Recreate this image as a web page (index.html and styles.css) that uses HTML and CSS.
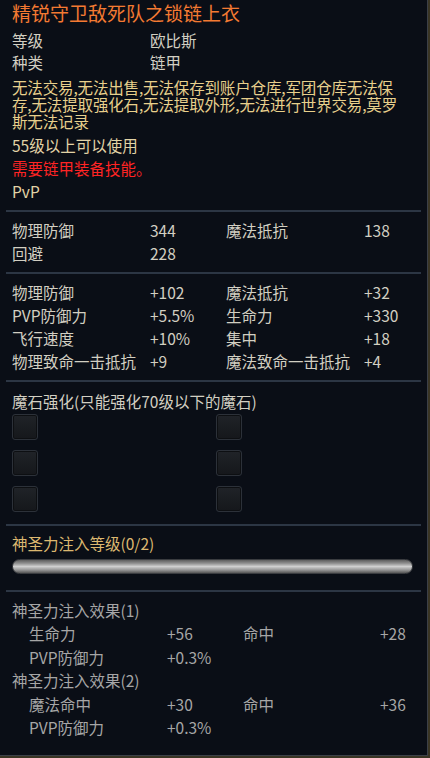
FILE: index.html
```html
<!DOCTYPE html>
<html lang="zh-CN">

<head>
    <meta charset="UTF-8">
    <meta name="viewport" content="width=device-width, initial-scale=1.0">
    <title>精锐守卫敌死队之锁链上衣</title>
    <link rel="stylesheet" href="styles.css">
</head>

<body>
    <div class="tooltip">
        <div class="head">
            <div class="item-name">精锐守卫敌死队之锁链上衣</div>
            <div class="info">
                <span>等级</span><span>欧比斯</span>
                <span>种类</span><span>链甲</span>
            </div>
            <div class="desc">
                <div class="desc-line">无法交易,无法出售,无法保存到账户仓库,军团仓库无法保</div>
                <div class="desc-line">存,无法提取强化石,无法提取外形,无法进行世界交易,莫罗</div>
                <div class="desc-line">斯无法记录</div>
            </div>
            <div class="notes">
                <div class="note">55级以上可以使用</div>
                <div class="note warn">需要链甲装备技能。</div>
                <div class="note">PvP</div>
            </div>
        </div>

        <div class="sep"></div>

        <div class="stats base">
            <span>物理防御</span><span>344</span><span>魔法抵抗</span><span>138</span>
            <span>回避</span><span>228</span><span></span><span></span>
        </div>

        <div class="sep"></div>

        <div class="stats bonus">
            <span>物理防御</span><span>+102</span><span>魔法抵抗</span><span>+32</span>
            <span>PVP防御力</span><span>+5.5%</span><span>生命力</span><span>+330</span>
            <span>飞行速度</span><span>+10%</span><span>集中</span><span>+18</span>
            <span>物理致命一击抵抗</span><span>+9</span><span>魔法致命一击抵抗</span><span>+4</span>
        </div>

        <div class="sep"></div>

        <div class="stones">
            <div class="section-title">魔石强化(只能强化70级以下的魔石)</div>
            <div class="slots">
                <div class="slot"></div><div class="slot"></div>
                <div class="slot"></div><div class="slot"></div>
                <div class="slot"></div><div class="slot"></div>
            </div>
        </div>

        <div class="sep sep-wide"></div>

        <div class="infuse">
            <div class="section-title gold">神圣力注入等级(0/2)</div>
            <div class="bar"></div>
        </div>

        <div class="sep sep-bar"></div>

        <div class="effects">
            <div class="effect-title">神圣力注入效果(1)</div>
            <div class="effect-row">
                <span>生命力</span><span>+56</span><span>命中</span><span>+28</span>
            </div>
            <div class="effect-row">
                <span>PVP防御力</span><span>+0.3%</span><span></span><span></span>
            </div>
            <div class="effect-title">神圣力注入效果(2)</div>
            <div class="effect-row">
                <span>魔法命中</span><span>+30</span><span>命中</span><span>+36</span>
            </div>
            <div class="effect-row">
                <span>PVP防御力</span><span>+0.3%</span><span></span><span></span>
            </div>
        </div>
    </div>
</body>

</html>
```

FILE: styles.css
```css
*,
*:before,
*:after {
    box-sizing: border-box;
}

body {
    margin: 0;
    background-color: #3a3524;
    font-family: "Noto Sans CJK SC", "Noto Sans", sans-serif;
    font-size: 15.5px;
    color: #d2cfc2;
}

.tooltip {
    width: 428px;
    height: 756px;
    background-color: #0a0e16;
    border-right: 1px solid #3c4048;
    border-bottom: 1px solid #3c4048;
    overflow: hidden;
}

.head {
    padding: 1px 10px 0 12px;
}

.item-name {
    font-size: 19px;
    line-height: 24px;
    color: #f47a32;
}

.info {
    display: grid;
    grid-template-columns: 138px auto;
    margin-top: 4px;
}

.info span {
    line-height: 22px;
}

.desc {
    margin-top: 6px;
    color: #e8d08c;
}

.desc-line {
    height: 17px;
    line-height: 17px;
    letter-spacing: -0.15px;
    white-space: nowrap;
}

.notes {
    margin-top: 4px;
}

.note {
    line-height: 23px;
    color: #e2d3a6;
}

.note.warn {
    color: #ff2424;
}

/* separators */
.sep {
    height: 2px;
    margin: 7px 6px 0 6px;
    background-color: #2c3644;
}

.sep-wide {
    margin-top: 12px;
}

.sep-bar {
    margin-top: 16px;
}

.stats {
    display: grid;
    grid-template-columns: 138px 76px 138px auto;
    padding: 0 10px 0 12px;
    margin-top: 7px;
}

.stats span {
    line-height: 23px;
    white-space: nowrap;
}

.section-title {
    line-height: 22px;
}

.section-title.gold {
    color: #dcb870;
}

.stones {
    padding: 0 10px 0 12px;
    margin-top: 8px;
}

.slots {
    display: grid;
    grid-template-columns: 204px 26px;
    row-gap: 10px;
    margin-top: 2px;
}

.slot {
    width: 26px;
    height: 26px;
    border: 1px solid #2c3139;
    border-radius: 3px;
    background: linear-gradient(to bottom, #202328, #15171b);
    box-shadow: inset 0 0 0 1px #0d0f12;
}

.infuse {
    padding: 0 14px 0 12px;
    margin-top: 6px;
}

.bar {
    height: 15px;
    margin-top: 5px;
    border: 1px solid #3a3c40;
    border-radius: 8px;
    background: linear-gradient(to bottom, #5e5e5e 0%, #8e8e8e 25%, #cfcfcf 50%, #9a9a9a 75%, #565656 100%);
}

.effects {
    padding: 0 10px 0 12px;
    margin-top: 7px;
    color: #a6a6a6;
}

.effect-title {
    line-height: 23.4px;
}

.effect-row {
    display: grid;
    grid-template-columns: 138px 76px 137px auto;
    padding-left: 17px;
    line-height: 23.4px;
}
```
